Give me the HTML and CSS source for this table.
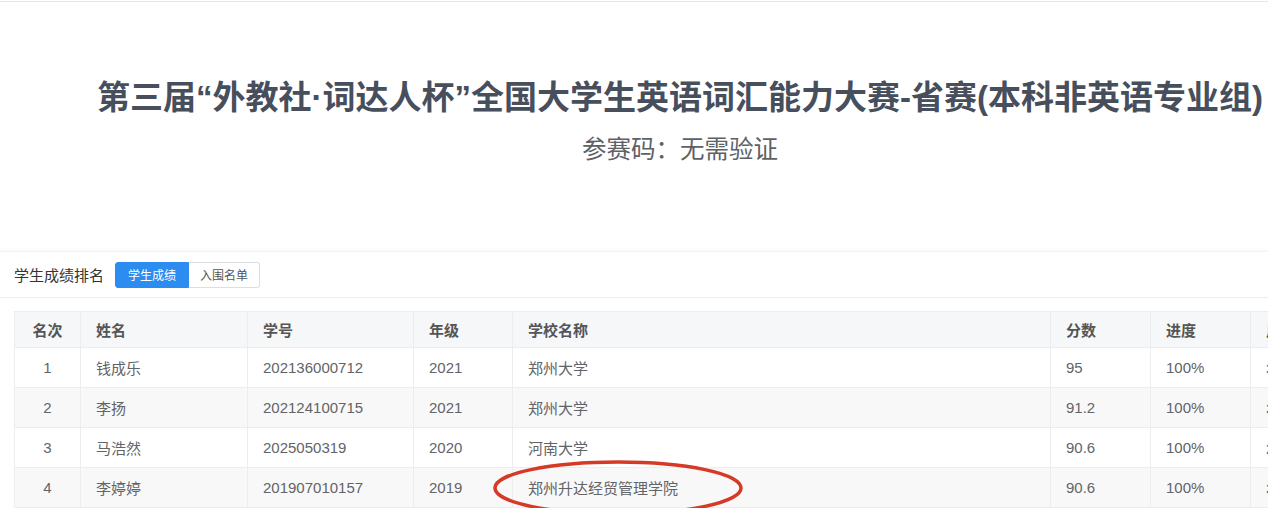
FILE: index.html
```html
<!DOCTYPE html>
<html lang="zh-CN">
<head>
    <meta charset="UTF-8">
    <meta name="viewport" content="width=device-width, initial-scale=1.0">
    <title>学生成绩排名</title>
    <link rel="stylesheet" href="styles.css">
</head>
<body>
    <div class="page">
        <div class="topline"></div>

        <!-- 比赛标题 -->
        <div class="banner">
            <h1 class="title">第三届“外教社·词达人杯”全国大学生英语词汇能力大赛-省赛(本科非英语专业组)</h1>
            <div class="subtitle">参赛码：无需验证</div>
        </div>

        <!-- 成绩卡片 -->
        <div class="card">
            <div class="card-head">
                <span class="card-title">学生成绩排名</span>
                <div class="btn-group">
                    <span class="btn active">学生成绩</span>
                    <span class="btn">入围名单</span>
                </div>
            </div>
            <div class="card-body">
                <div class="table-wrap">
                    <table class="rank">
                        <colgroup>
                            <col class="c-rank">
                            <col class="c-name">
                            <col class="c-id">
                            <col class="c-grade">
                            <col class="c-school">
                            <col class="c-score">
                            <col class="c-prog">
                            <col class="c-time">
                        </colgroup>
                        <thead>
                            <tr>
                                <th class="center">名次</th>
                                <th>姓名</th>
                                <th>学号</th>
                                <th>年级</th>
                                <th>学校名称</th>
                                <th>分数</th>
                                <th>进度</th>
                                <th>用时</th>
                            </tr>
                        </thead>
                        <tbody>
                            <tr>
                                <td class="center">1</td>
                                <td>钱成乐</td>
                                <td>202136000712</td>
                                <td>2021</td>
                                <td>郑州大学</td>
                                <td>95</td>
                                <td>100%</td>
                                <td>3分12秒</td>
                            </tr>
                            <tr class="stripe">
                                <td class="center">2</td>
                                <td>李扬</td>
                                <td>202124100715</td>
                                <td>2021</td>
                                <td>郑州大学</td>
                                <td>91.2</td>
                                <td>100%</td>
                                <td>3分40秒</td>
                            </tr>
                            <tr>
                                <td class="center">3</td>
                                <td>马浩然</td>
                                <td>2025050319</td>
                                <td>2020</td>
                                <td>河南大学</td>
                                <td>90.6</td>
                                <td>100%</td>
                                <td>2分58秒</td>
                            </tr>
                            <tr class="stripe">
                                <td class="center">4</td>
                                <td>李婷婷</td>
                                <td>201907010157</td>
                                <td>2019</td>
                                <td>郑州升达经贸管理学院</td>
                                <td>90.6</td>
                                <td>100%</td>
                                <td>3分21秒</td>
                            </tr>
                        </tbody>
                    </table>

                    <!-- 红色圈注 -->
                    <svg class="mark" width="256" height="62" viewBox="0 0 256 62">
                        <ellipse cx="128" cy="30" rx="123" ry="26" fill="none" stroke="#d63a26" stroke-width="3.5"/>
                    </svg>
                </div>
            </div>
        </div>
    </div>
</body>
</html>
```

FILE: styles.css
```css
body {
    margin: 0;
    padding: 0;
    background-color: #fff;
    font-family: "Liberation Sans", "Noto Sans CJK SC", sans-serif;
    overflow: hidden;
}

.page {
    width: 1360px;
}

.topline {
    height: 1px;
    margin-top: 1px;
    background-color: #e6e6e6;
}

.banner {
    padding-top: 76px;
    text-align: center;
}

.title {
    margin: 0;
    font-size: 33px;
    line-height: 40px;
    font-weight: bold;
    color: #474e5c;
    white-space: nowrap;
    font-family: "Liberation Sans", "Noto Sans CJK SC", sans-serif;
}

.subtitle {
    margin-top: 14px;
    font-size: 24.5px;
    line-height: 32px;
    color: #5e6166;
    font-family: "Noto Sans CJK SC", sans-serif;
}

.card {
    margin-top: 87px;
    border-top: 1px solid #f2f2f2;
    box-shadow: 0 -1px 3px rgba(0, 0, 0, 0.03);
}

.card-head {
    height: 45px;
    padding: 0 14px;
    display: flex;
    align-items: center;
    gap: 11px;
    border-bottom: 1px solid #eceef0;
}

.card-title {
    font-size: 15px;
    color: #333;
    font-family: "Noto Sans CJK SC", sans-serif;
}

.btn-group {
    display: flex;
}

.btn {
    height: 24px;
    line-height: 24px;
    padding: 0 12px;
    font-size: 12px;
    color: #555;
    border: 1px solid #dcdee2;
    font-family: "Noto Sans CJK SC", sans-serif;
}

.btn:first-child {
    border-radius: 3px 0 0 3px;
}

.btn:last-child {
    border-radius: 0 3px 3px 0;
    border-left: none;
    padding: 0 11px;
}

.btn.active {
    background-color: #2d8cf0;
    border-color: #2d8cf0;
    color: #fff;
}

.card-body {
    padding: 13px 14px 0;
}

.table-wrap {
    position: relative;
}

.rank {
    border-collapse: collapse;
    table-layout: fixed;
    width: 1326px;
    font-size: 15px;
    color: #626467;
}

.c-rank { width: 66px; }
.c-name { width: 167px; }
.c-id { width: 166px; }
.c-grade { width: 99px; }
.c-school { width: 538px; }
.c-score { width: 100px; }
.c-prog { width: 100px; }
.c-time { width: 90px; }

.rank th,
.rank td {
    border: 1px solid #ebedf0;
    padding: 0 15px;
    text-align: left;
    white-space: nowrap;
    overflow: hidden;
}

.rank th {
    height: 35px;
    background-color: #f6f7f8;
    color: #555;
    font-weight: bold;
    font-size: 15px;
    font-family: "Noto Sans CJK SC", sans-serif;
}

.rank td {
    height: 39px;
}

.rank .center {
    text-align: center;
}

.rank tr.stripe td {
    background-color: #f8f8f9;
}

/* 圈注覆盖在表格上 */
.mark {
    position: absolute;
    left: 476px;
    top: 147px;
}
```
